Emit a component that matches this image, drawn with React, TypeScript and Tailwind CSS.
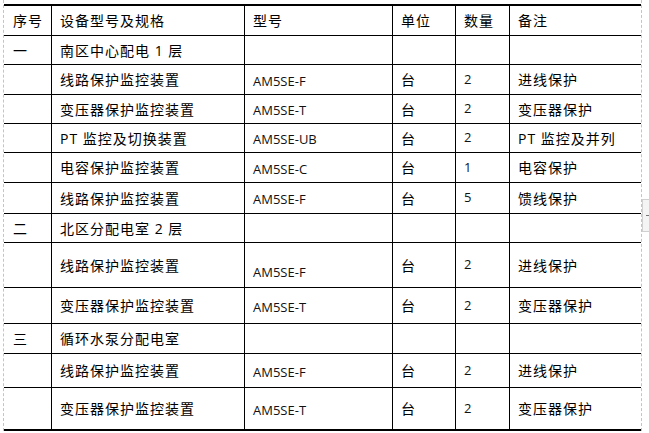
const grid = 'grid grid-cols-[48px_193px_148px_63px_54px_131px]';
const cjk = "font-['Open_Sans','Noto_Sans_CJK_SC',sans-serif] text-[14px] tracking-[1px] text-black";
const latin = "font-['Open_Sans',sans-serif] text-[13px] text-[#111]";

type Row = {
  no?: string;
  name: string;
  model?: string;
  unit?: string;
  qty?: string;
  note?: string;
  h: string;
  modelPad?: string;
};

const rows: Row[] = [
  { no: '一', name: '南区中心配电 1 层', h: 'h-[29px]' },
  { name: '线路保护监控装置', model: 'AM5SE-F', unit: '台', qty: '2', note: '进线保护', h: 'h-[30px]' },
  { name: '变压器保护监控装置', model: 'AM5SE-T', unit: '台', qty: '2', note: '变压器保护', h: 'h-[29px]' },
  { name: 'PT 监控及切换装置', model: 'AM5SE-UB', unit: '台', qty: '2', note: 'PT 监控及并列', h: 'h-[29px]' },
  { name: '电容保护监控装置', model: 'AM5SE-C', unit: '台', qty: '1', note: '电容保护', h: 'h-[30px]' },
  { name: '线路保护监控装置', model: 'AM5SE-F', unit: '台', qty: '5', note: '馈线保护', h: 'h-[31px]' },
  { no: '二', name: '北区分配电室 2 层', h: 'h-[29px]' },
  { name: '线路保护监控装置', model: 'AM5SE-F', unit: '台', qty: '2', note: '进线保护', h: 'h-[45px]', modelPad: 'pt-[16px]' },
  { name: '变压器保护监控装置', model: 'AM5SE-T', unit: '台', qty: '2', note: '变压器保护', h: 'h-[36px]' },
  { no: '三', name: '循环水泵分配电室', h: 'h-[30px]' },
  { name: '线路保护监控装置', model: 'AM5SE-F', unit: '台', qty: '2', note: '进线保护', h: 'h-[34px]' },
  { name: '变压器保护监控装置', model: 'AM5SE-T', unit: '台', qty: '2', note: '变压器保护', h: 'h-[43px]' },
];

const cell = 'flex items-center pl-2 border-r border-black';

export default function App() {
  return (
    <div className="relative w-[649px] h-[433px] bg-white overflow-hidden">
      <div className="ml-[3px] w-[639px] pt-[4px] border-x border-dashed border-[#c4c4c4]">
        {/* header */}
        <div className={`${grid} h-[32px] border-t-2 border-b border-black ${cjk}`}>
          <div className={`${cell} pl-[9px]`}>序号</div>
          <div className={cell}>设备型号及规格</div>
          <div className={cell}>型号</div>
          <div className={cell}>单位</div>
          <div className={cell}>数量</div>
          <div className="flex items-center pl-2">备注</div>
        </div>

        {rows.map((r, i) => {
          const last = i === rows.length - 1;
          return (
            <div
              key={i}
              className={`${grid} ${r.h} ${last ? 'border-b-2' : 'border-b'} border-black`}
            >
              <div className={`${cell} pl-[9px] ${cjk}`}>{r.no}</div>
              <div className={`${cell} ${cjk}`}>{r.name}</div>
              <div className={`${cell} ${latin} ${r.modelPad ?? 'pt-[4px]'}`}>{r.model}</div>
              <div className={`${cell} ${cjk}`}>{r.unit}</div>
              <div className={`${cell} ${latin}`}>{r.qty}</div>
              <div className={`flex items-center pl-2 ${cjk}`}>{r.note}</div>
            </div>
          );
        })}
      </div>

      {/* edge handle on the right */}
      <div className="absolute left-[642px] top-[199px] w-[8px] h-[33px] bg-[#f4f4f4] border-y border-l border-[#d0d0d0] flex items-center justify-end">
        <div className="w-[4px] h-px bg-[#777]" />
      </div>
    </div>
  );
}
